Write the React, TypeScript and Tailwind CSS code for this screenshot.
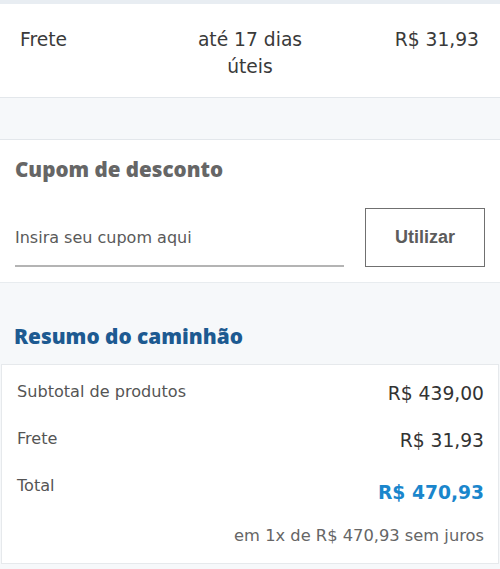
import React from "react";

const body = { fontFamily: '"DejaVu Sans", Verdana, sans-serif' };
const head = { fontFamily: '"Open Sans", Lato, sans-serif' };
const arial = { fontFamily: '"Liberation Sans", Arial, sans-serif' };

export default function App() {
  return (
    <div className="w-[500px] min-h-[569px] bg-[#f6f8fa]" style={body}>
      {/* Shipping row */}
      <div className="bg-white border-t-4 border-b border-t-[#e8edf2] border-b-[#e3e7eb] h-[98px] pt-[22px]">
        <div className="grid grid-cols-[1fr_124px_1fr] px-5 text-[18.7px] leading-[27px] text-[#3a3a3a]">
          <div>Frete</div>
          <div className="text-center">até 17 dias úteis</div>
          <div className="text-right pr-px">R$ 31,93</div>
        </div>
      </div>

      {/* spacer */}
      <div className="h-[42px] border-b border-[#e3e7eb]" />

      {/* Coupon */}
      <div className="bg-white h-[143px] border-b border-[#e8ecef] pt-[16px] px-[15px]">
        <div className="text-[20.6px] leading-[26px] font-extrabold text-[#666666]" style={head}>
          Cupom de desconto
        </div>
        <div className="flex items-end gap-[21px] mt-[26px]">
          <div className="flex-1 h-[58px] flex items-center border-b-2 border-[#b4b4b4]">
            <span className="text-[16px] text-[#5a5a5a] mt-[1px]">Insira seu cupom aqui</span>
          </div>
          <button
            className="w-[120px] h-[59px] border border-[#707070] bg-white text-[18px] font-bold text-[#5c5c5c]"
            style={arial}
          >
            Utilizar
          </button>
        </div>
      </div>

      {/* Summary */}
      <div className="pt-[39px]">
        <div className="px-[14px] text-[20.8px] leading-[28px] font-extrabold text-[#1d5a91] mb-[14px]" style={head}>
          Resumo do caminhão
        </div>
        <div className="mx-px bg-white border border-[#e6e9ec] pt-[15px] pb-[15px] pl-[15px] pr-[14px]">
          <div className="flex justify-between h-[47px]">
            <span className="text-[16.1px] leading-6 text-[#555555]">Subtotal de produtos</span>
            <span className="text-[18.7px] leading-6 mt-[2px] text-[#333333]">R$ 439,00</span>
          </div>
          <div className="flex justify-between h-[47px]">
            <span className="text-[16.1px] leading-6 text-[#555555]">Frete</span>
            <span className="text-[18.7px] leading-6 mt-[2px] text-[#333333]">R$ 31,93</span>
          </div>
          <div className="flex justify-between h-[47px]">
            <span className="text-[16.1px] leading-6 text-[#555555]">Total</span>
            <span className="text-[18.7px] leading-6 mt-[7px] font-bold text-[#1a86cc]">R$ 470,93</span>
          </div>
          <div className="text-right text-[16.3px] leading-6 mt-[3px] text-[#666666]">
            em 1x de R$ 470,93 sem juros
          </div>
        </div>
      </div>
    </div>
  );
}
